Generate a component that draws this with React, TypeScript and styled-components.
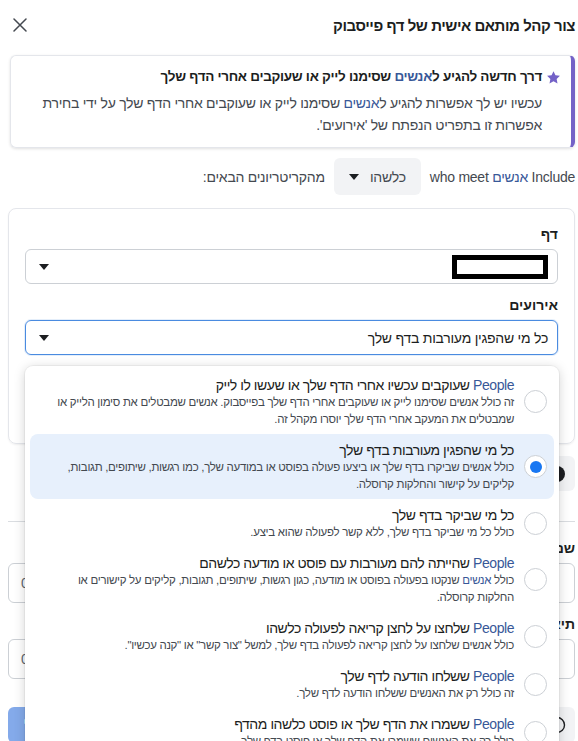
import React from 'react';
import styled, { createGlobalStyle } from 'styled-components';

const GlobalStyle = createGlobalStyle`
  * { box-sizing: border-box; }
  body {
    margin: 0;
    background: #ffffff;
    font-family: "Liberation Sans", Arial, "DejaVu Sans", sans-serif;
    color: #1c1e21;
  }
`;

type EventOption = {
  people?: boolean;
  title: string;
  desc: React.ReactNode;
  selected?: boolean;
};

const Caret = () => (
  <svg width="10" height="6" viewBox="0 0 10 6">
    <path d="M0 0h10L5 6z" fill="#1c1e21" />
  </svg>
);

const App: React.FC = () => {
  return (
    <>
      <GlobalStyle />
      <Page dir="rtl">
        <Header>
          <Title>צור קהל מותאם אישית של דף פייסבוק</Title>
          <CloseButton aria-label="סגור">
            <svg width="14" height="14" viewBox="0 0 14 14">
              <path d="M1 1l12 12M13 1L1 13" stroke="#444950" strokeWidth="1.5" strokeLinecap="round" />
            </svg>
          </CloseButton>
        </Header>

        <Notice>
          <NoticeHead>
            <svg width="15" height="15" viewBox="0 0 24 24">
              <path
                d="M12 1.8l3.1 6.6 7.2.9-5.3 5 1.4 7.1L12 17.9l-6.4 3.5L7 14.3l-5.3-5 7.2-.9z"
                fill="#7462c7"
              />
            </svg>
            <span>
              דרך חדשה להגיע ל<Link>אנשים</Link> שסימנו לייק או שעוקבים אחרי הדף שלך
            </span>
          </NoticeHead>
          <NoticeText>
            עכשיו יש לך אפשרות להגיע ל<Link>אנשים</Link> שסימנו לייק או שעוקבים אחרי הדף שלך על ידי בחירת
            אפשרות זו בתפריט הנפתח של 'אירועים'.
          </NoticeText>
        </Notice>

        <IncludeRow>
          <span>
            Include <Link>אנשים</Link> who meet
          </span>
          <AnyButton>
            <span>כלשהו</span>
            <Caret />
          </AnyButton>
          <span>מהקריטריונים הבאים:</span>
        </IncludeRow>

        <CriteriaCard>
          <FieldLabel>דף</FieldLabel>
          <Select>
            <Redacted />
            <Caret />
          </Select>

          <FieldLabel>אירועים</FieldLabel>
          <SelectAnchor>
            <Select $focused>
              <span>כל מי שהפגין מעורבות בדף שלך</span>
              <Caret />
            </Select>
            <Menu>
              {options.map((o, i) => (
                <MenuItem key={i} $selected={o.selected}>
                  <Radio $checked={o.selected} />
                  <ItemText>
                    <ItemTitle>
                      {o.people && <Link>People</Link>} {o.title}
                    </ItemTitle>
                    <ItemDesc>{o.desc}</ItemDesc>
                  </ItemText>
                </MenuItem>
              ))}
            </Menu>
          </SelectAnchor>

          <FieldLabel>תקופת שמירה</FieldLabel>
          <Select>
            <span>365 ימים</span>
          </Select>
        </CriteriaCard>

        <AddRow>
          <GreyButton>
            <svg width="16" height="16" viewBox="0 0 16 16">
              <circle cx="8" cy="8" r="8" fill="#1c1e21" />
            </svg>
            <span>כלול עוד אנשים</span>
          </GreyButton>
        </AddRow>

        <Divider />

        <FieldLabel>שם הקהל</FieldLabel>
        <TextInput>
          <span />
          <Counter>0/50</Counter>
        </TextInput>

        <FieldLabel>תיאור</FieldLabel>
        <TextInput>
          <span />
          <Counter>0/100</Counter>
        </TextInput>

        <Footer>
          <HelpButton>
            <svg width="18" height="18" viewBox="0 0 18 18">
              <circle cx="9" cy="9" r="7.5" fill="none" stroke="#1c1e21" strokeWidth="1.4" />
            </svg>
          </HelpButton>
          <PrimaryButton>צור קהל</PrimaryButton>
        </Footer>
      </Page>
    </>
  );
};

export default App;

const Page = styled.div`
  width: 578px;
  height: 741px;
  overflow: hidden;
  padding: 0 3px 0 8px;
  direction: rtl;
`;

const Header = styled.div`
  height: 50px;
  display: flex;
  align-items: center;
  justify-content: space-between;
  padding-left: 5px;
`;

const Title = styled.h1`
  margin: 0;
  font-size: 15px;
  letter-spacing: -0.45px;
  font-weight: 700;
  color: #1c1e21;
`;

const CloseButton = styled.button`
  border: 0;
  background: none;
  padding: 0;
  display: flex;
  cursor: pointer;
`;

const Link = styled.span`
  color: #385898;
`;

const Notice = styled.div`
  margin: 5px 0 0 2px;
  border: 1px solid #e4e6eb;
  border-right: 4px solid #7462c7;
  border-radius: 6px;
  box-shadow: 0 1px 3px rgba(0, 0, 0, 0.12);
  padding: 11px 10px 11px 14px;
`;

const NoticeHead = styled.div`
  display: flex;
  align-items: center;
  gap: 4px;
  font-size: 13.5px;
  letter-spacing: -0.3px;
  font-weight: 700;
  line-height: 20px;
  color: #1c1e21;
`;

const NoticeText = styled.p`
  margin: 5px 19px 0 0;
  font-size: 14px;
  letter-spacing: -0.28px;
  line-height: 22px;
  color: #444950;
`;

const IncludeRow = styled.div`
  margin-top: 10px;
  display: flex;
  align-items: center;
  gap: 9px;
  font-size: 14px;
  letter-spacing: -0.25px;
  color: #444950;
`;

const AnyButton = styled.button`
  width: 87px;
  height: 37px;
  border: 0;
  border-radius: 6px;
  background: #f2f3f5;
  display: flex;
  align-items: center;
  justify-content: center;
  gap: 11px;
  padding: 0;
  font-family: inherit;
  font-size: 14px;
  letter-spacing: -0.25px;
  color: #444950;
`;

const CriteriaCard = styled.div`
  margin-top: 13px;
  border: 1px solid #e4e6eb;
  border-radius: 8px;
  box-shadow: 0 1px 2px rgba(0, 0, 0, 0.06);
  padding: 8px 16px 17px 16px;
`;

const FieldLabel = styled.div`
  font-size: 14px;
  font-weight: 700;
  line-height: 20px;
  color: #1c1e21;
  margin: 11px 0 5px;

  ${CriteriaCard} > &:first-child {
    margin-top: 7px;
  }
`;

const Select = styled.div<{ $focused?: boolean }>`
  height: 35px;
  border: 1px solid ${(p) => (p.$focused ? '#4a8be0' : '#ccd0d5')};
  border-radius: 6px;
  box-shadow: ${(p) => (p.$focused ? '0 0 0 1px rgba(74, 139, 224, 0.15)' : 'none')};
  display: flex;
  align-items: center;
  justify-content: space-between;
  padding: 0 9px 0 13px;
  font-size: 14px;
  letter-spacing: -0.25px;
  color: #1c1e21;
`;

const Redacted = styled.div`
  width: 96px;
  height: 24px;
  border: 5px solid #000;
  background: #fff;
`;

const SelectAnchor = styled.div`
  position: relative;
`;

const Menu = styled.div`
  position: absolute;
  top: calc(100% + 11px);
  right: -1px;
  left: 0;
  z-index: 10;
  background: #fff;
  border-radius: 8px;
  box-shadow: 0 2px 12px rgba(0, 0, 0, 0.18), 0 0 0 1px rgba(0, 0, 0, 0.04);
  padding: 3px 0 8px;
`;

const MenuItem = styled.div<{ $selected?: boolean }>`
  margin: 0 5px;
  padding: 6.5px 7px 6.5px 14px;
  border-radius: 8px;
  background: ${(p) => (p.$selected ? '#e7f0fc' : 'transparent')};
  display: flex;
  align-items: center;
  gap: 10px;
`;

const Radio = styled.div<{ $checked?: boolean }>`
  flex: none;
  width: 23px;
  height: 23px;
  border-radius: 50%;
  border: 1px solid #ccd0d5;
  background: #fff;
  display: flex;
  align-items: center;
  justify-content: center;

  &::after {
    content: '';
    width: 12px;
    height: 12px;
    border-radius: 50%;
    background: ${(p) => (p.$checked ? '#1877f2' : 'transparent')};
  }
`;

const ItemText = styled.div`
  flex: 1;
`;

const ItemTitle = styled.div`
  font-size: 14px;
  letter-spacing: -0.45px;
  line-height: 18px;
  color: #1c1e21;
`;

const ItemDesc = styled.div`
  font-size: 11.5px;
  letter-spacing: -0.3px;
  line-height: 17px;
  color: #444950;
`;

const AddRow = styled.div`
  margin-top: 12px;
  display: flex;
`;

const GreyButton = styled.button`
  height: 35px;
  border: 0;
  border-radius: 6px;
  background: #f2f3f5;
  display: flex;
  align-items: center;
  gap: 8px;
  padding: 0 10px 0 12px;
  font-family: inherit;
  font-size: 14px;
  font-weight: 700;
  color: #1c1e21;
`;

const Divider = styled.hr`
  margin: 30px 0 16px;
  border: 0;
  border-top: 1px solid #dadde1;
`;

const TextInput = styled.div`
  height: 40px;
  border: 1px solid #ccd0d5;
  border-radius: 6px;
  display: flex;
  align-items: center;
  justify-content: space-between;
  padding: 0 12px;
`;

const Counter = styled.span`
  font-size: 14px;
  color: #606770;
`;

const Footer = styled.div`
  margin-top: 28px;
  display: flex;
  justify-content: space-between;
  align-items: center;
`;

const HelpButton = styled.button`
  width: 36px;
  height: 36px;
  border: 0;
  border-radius: 6px;
  background: #f2f3f5;
  display: flex;
  align-items: center;
  justify-content: center;
  padding: 0;
`;

const PrimaryButton = styled.button`
  height: 36px;
  padding: 0 16px;
  border: 0;
  border-radius: 6px;
  background: #84aaea;
  color: #fff;
  font-family: inherit;
  font-size: 14px;
  font-weight: 700;
`;

const options: EventOption[] = [
  {
    people: true,
    title: 'שעוקבים עכשיו אחרי הדף שלך או שעשו לו לייק',
    desc: 'זה כולל אנשים שסימנו לייק או שעוקבים אחרי הדף שלך בפייסבוק. אנשים שמבטלים את סימון הלייק או שמבטלים את המעקב אחרי הדף שלך יוסרו מקהל זה.',
  },
  {
    title: 'כל מי שהפגין מעורבות בדף שלך',
    desc: 'כולל אנשים שביקרו בדף שלך או ביצעו פעולה בפוסט או במודעה שלך, כמו רגשות, שיתופים, תגובות, קליקים על קישור והחלקות קרוסלה.',
    selected: true,
  },
  {
    title: 'כל מי שביקר בדף שלך',
    desc: 'כולל כל מי שביקר בדף שלך, ללא קשר לפעולה שהוא ביצע.',
  },
  {
    people: true,
    title: 'שהייתה להם מעורבות עם פוסט או מודעה כלשהם',
    desc: (
      <>
        כולל <Link>אנשים</Link> שנקטו בפעולה בפוסט או מודעה, כגון רגשות, שיתופים, תגובות, קליקים על קישורים או החלקות קרוסלה.
      </>
    ),
  },
  {
    people: true,
    title: 'שלחצו על לחצן קריאה לפעולה כלשהו',
    desc: 'כולל אנשים שלחצו על לחצן קריאה לפעולה בדף שלך, למשל "צור קשר" או "קנה עכשיו".',
  },
  {
    people: true,
    title: 'ששלחו הודעה לדף שלך',
    desc: 'זה כולל רק את האנשים ששלחו הודעה לדף שלך.',
  },
  {
    people: true,
    title: 'ששמרו את הדף שלך או פוסט כלשהו מהדף',
    desc: 'כולל רק את האנשים ששמרו את הדף שלך או פוסט בדף שלך.',
  },
];
